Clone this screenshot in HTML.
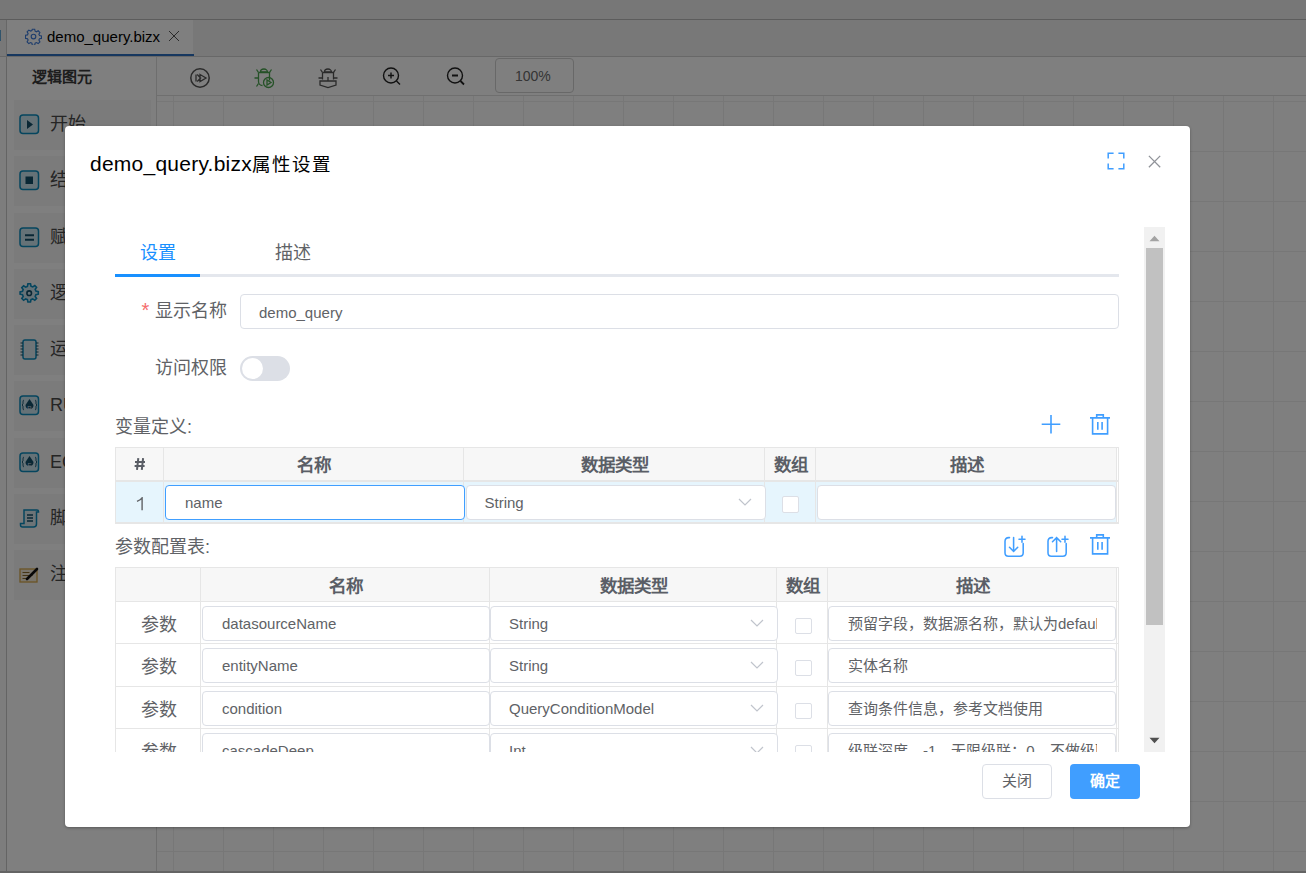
<!DOCTYPE html><html lang="zh-CN"><head><meta charset="utf-8"><style>
*{box-sizing:border-box;margin:0;padding:0}
html,body{width:1306px;height:873px;overflow:hidden;background:#fff;font-family:"Liberation Sans",sans-serif;position:relative}
.a{position:absolute}
.t{white-space:nowrap}
#top{left:0;top:0;width:1306px;height:20px;background:#efefef;border-bottom:1px solid #b9b9b9}
#tabs{left:0;top:20px;width:1306px;height:37px;background:#f0f0f0;border-bottom:1px solid #d0d0d0}
#tab1{left:6px;top:20px;width:187px;height:36px;background:#fff;border-left:1px solid #cfcfcf}
#tab1u{left:7px;top:54px;width:187px;height:2px;background:#2d6fbf}
#strip{left:0;top:57px;width:7px;height:816px;background:#fafafa;border-right:1px solid #c8c8c8}
#lp{left:7px;top:57px;width:150px;height:816px;background:#fff;border-right:1px solid #dcdcdc}
.item{left:14px;width:137px;height:50px;background:#f7f7f7}
.itxt{left:50px;font-size:18px;color:#4a4a4a;line-height:20px}
.ico{left:19px;width:21px;height:21px}
#tb{left:157px;top:57px;width:1149px;height:39px;background:#fff;border-bottom:1px solid #dedede}
#grid{left:157px;top:96px;width:1149px;height:776px;
 background-image:linear-gradient(to right,#eeeeee 1px,transparent 1px),linear-gradient(to bottom,#eeeeee 1px,transparent 1px);
 background-size:50px 50px;background-position:16px 5px}
#bot{left:0;top:871px;width:1306px;height:2px;background:#c8c8c8}
#mask{left:0;top:0;width:1306px;height:873px;background:rgba(0,0,0,.5)}
#dlg{left:65px;top:126px;width:1125px;height:701px;background:#fff;border-radius:4px;box-shadow:0 1px 3px rgba(0,0,0,.3)}
.lbl{font-size:18px;line-height:20px;color:#606266}
.inp{border:1px solid #dcdfe6;border-radius:4px;background:#fff}
.itx{font-size:15px;line-height:20px;color:#606266}
.hd{font-size:17.5px;line-height:20px;font-weight:bold;color:#5a5e66;text-align:center}
.cb{width:17px;height:17px;border:1px solid #dcdfe6;border-radius:2px;background:#fff}
</style></head><body>
<div class="a" id="top"></div><div class="a" id="tabs"></div><div class="a" id="tab1"></div><div class="a" id="tab1u"></div>
<svg class="a" style="left:25px;top:28px" width="17" height="17" viewBox="0 0 17 17"><g fill="none" stroke="#3d7bd9" stroke-width="1.15">
<path d="M7.3 1.2h2.4l.4 2 1.3.6 1.8-1 1.7 1.7-1 1.8.6 1.3 2 .4v2.4l-2 .4-.6 1.3 1 1.8-1.7 1.7-1.8-1-1.3.6-.4 2H7.3l-.4-2-1.3-.6-1.8 1-1.7-1.7 1-1.8-.6-1.3-2-.4V7.3l2-.4.6-1.3-1-1.8 1.7-1.7 1.8 1 1.3-.6z"/><circle cx="8.5" cy="8.5" r="2.3"/></g></svg>
<div class="a t" style="left:47px;top:27px;font-size:15px;color:#000;line-height:20px">demo_query.bizx</div>
<svg class="a" style="left:168px;top:30px" width="12" height="12" viewBox="0 0 12 12"><path d="M1 1L11 11M11 1L1 11" stroke="#444" stroke-width="0.9"/></svg>
<div class="a t" style="left:-7px;top:26px;font-size:15px;color:#222;line-height:20px">d</div>
<div class="a" id="strip"></div><div class="a" id="lp"></div>
<div class="a t" style="left:32px;top:67px;font-size:15px;font-weight:bold;color:#3a3a3a;line-height:20px">逻辑图元</div>
<div class="a item" style="top:100.0px"></div>
<div class="a t itxt" style="top:114.0px">开始</div>
<div class="a item" style="top:156.25px"></div>
<div class="a t itxt" style="top:170.25px">结束</div>
<div class="a item" style="top:212.5px"></div>
<div class="a t itxt" style="top:226.5px">赋值</div>
<div class="a item" style="top:268.75px"></div>
<div class="a t itxt" style="top:282.75px">逻辑</div>
<div class="a item" style="top:325.0px"></div>
<div class="a t itxt" style="top:339.0px">运算</div>
<div class="a item" style="top:381.25px"></div>
<div class="a t itxt" style="top:395.25px">RULE</div>
<div class="a item" style="top:437.5px"></div>
<div class="a t itxt" style="top:451.5px">ECA</div>
<div class="a item" style="top:493.75px"></div>
<div class="a t itxt" style="top:507.75px">脚本</div>
<div class="a item" style="top:550.0px"></div>
<div class="a t itxt" style="top:564.0px">注释</div>
<svg class="a ico" style="top:114.0px" viewBox="0 0 21 21"><rect x="1" y="1" width="18.5" height="18.5" rx="3" fill="#cbe4ef" stroke="#0b8bbd" stroke-width="1.5"/><path d="M8 6l6 4.5-6 4.5z" fill="#134e69"/></svg>
<svg class="a ico" style="top:170.25px" viewBox="0 0 21 21"><rect x="1" y="1" width="18.5" height="18.5" rx="3" fill="#cbe4ef" stroke="#0b8bbd" stroke-width="1.5"/><rect x="6.5" y="6.5" width="7.5" height="7.5" fill="#134e69"/></svg>
<svg class="a ico" style="top:226.5px" viewBox="0 0 21 21"><rect x="1" y="1" width="18.5" height="18.5" rx="3" fill="#cbe4ef" stroke="#0b8bbd" stroke-width="1.5"/><path d="M6 8.3h9M6 12.7h9" stroke="#134e69" stroke-width="2"/></svg>
<svg class="a ico" style="top:282.75px" viewBox="0 0 21 21"><path d="M8.9 .8h2.6l.5 2.4 1.7.7 2.1-1.4 1.8 1.8-1.4 2.1.7 1.7 2.4.5v2.6l-2.4.5-.7 1.7 1.4 2.1-1.8 1.8-2.1-1.4-1.7.7-.5 2.4H8.9l-.5-2.4-1.7-.7-2.1 1.4-1.8-1.8 1.4-2.1-.7-1.7-2.4-.5V8.9l2.4-.5.7-1.7-1.4-2.1 1.8-1.8 2.1 1.4 1.7-.7z" fill="#cbe4ef" stroke="#0b8bbd" stroke-width="1.6"/><circle cx="10.2" cy="10.2" r="2.3" fill="none" stroke="#134e69" stroke-width="1.6"/></svg>
<svg class="a ico" style="top:339.0px" viewBox="0 0 21 21"><rect x="4" y="1" width="13" height="19" rx="2" fill="#dbe9ef" stroke="#0b8bbd" stroke-width="1.5"/><path d="M1.5 4h2.5M1.5 7h2.5M1.5 10h2.5M1.5 13h2.5M1.5 16h2.5M17 4h2.5M17 7h2.5M17 10h2.5M17 13h2.5M17 16h2.5" stroke="#134e69" stroke-width="1.2"/></svg>
<svg class="a ico" style="top:395.25px" viewBox="0 0 21 21"><rect x="1" y="1" width="18.5" height="18.5" rx="3" fill="#cbe4ef" stroke="#0b8bbd" stroke-width="1.5"/><path d="M10.5 4l4 6a4 4 0 1 1-8 0z" fill="#134e69"/><text x="10.5" y="15" font-size="6" text-anchor="middle" fill="#cde" font-family="Liberation Sans">R</text><path d="M5 5q-1 0-1 2v2l-1 1 1 1v2q0 2 1 2M16 5q1 0 1 2v2l1 1-1 1v2q0 2-1 2" fill="none" stroke="#134e69" stroke-width=".9"/></svg>
<svg class="a ico" style="top:451.5px" viewBox="0 0 21 21"><rect x="1" y="1" width="18.5" height="18.5" rx="3" fill="#cbe4ef" stroke="#0b8bbd" stroke-width="1.5"/><path d="M10.5 4l4 6a4 4 0 1 1-8 0z" fill="#134e69"/><text x="10.5" y="15" font-size="6" text-anchor="middle" fill="#cde" font-family="Liberation Sans">E</text><path d="M5 5q-1 0-1 2v2l-1 1 1 1v2q0 2 1 2M16 5q1 0 1 2v2l1 1-1 1v2q0 2-1 2" fill="none" stroke="#134e69" stroke-width=".9"/></svg>
<svg class="a ico" style="top:507.75px" viewBox="0 0 21 21"><path d="M5 2h13q1.5 0 1.5 1.5V4h-2v12q0 3-3 3H3.5q-2 0-2-2v-1.5h3.5V4q0-2 0-2z" fill="#dbe9ef" stroke="#0b8bbd" stroke-width="1.5"/><path d="M8 7h6M8 10h6M8 13h6" stroke="#134e69" stroke-width="1.4"/></svg>
<svg class="a ico" style="top:564.0px" viewBox="0 0 21 21"><rect x="1" y="5" width="17" height="13" fill="#f3ead8" stroke="#d6a84a" stroke-width="1.3"/><path d="M3.5 8.5h7M3.5 11.5h10M3.5 14.5h5" stroke="#8a6a2a" stroke-width="1.2"/><path d="M8 15l10-10" stroke="#111" stroke-width="2.6" stroke-linecap="round"/></svg>
<div class="a" id="tb"></div><div class="a" id="grid"></div>
<svg class="a" style="left:188px;top:66px" width="24" height="24" viewBox="0 0 24 24"><g fill="none" stroke="#555" stroke-width="1.5"><circle cx="12" cy="12" r="9.2"/><path d="M8 8.5v7M9.2 8.5l3.5 3.5-3.5 3.5M12 8.5l6 3.5-6 3.5z" stroke-width="1.3"/></g></svg>
<svg class="a" style="left:252px;top:66px" width="24" height="24" viewBox="0 0 24 24"><g fill="none" stroke="#4aa34f" stroke-width="1.3"><path d="M8.5 6a3.5 3 0 0 1 7 0z"/><path d="M6.5 6.5h11v8M6.5 6.5v9a4 4 0 0 0 4 4"/><path d="M2.5 12h3.5M4.5 3.5l2 3M19.5 3.5l-2 3M4.5 20.5l2-3"/><circle cx="16.5" cy="16.5" r="5"/><path d="M15 14v5l4-2.5z"/></g></svg>
<svg class="a" style="left:316px;top:66px" width="24" height="24" viewBox="0 0 24 24"><g fill="none" stroke="#555" stroke-width="1.3"><path d="M8.5 6a3.5 3 0 0 1 7 0z"/><path d="M6.5 6.5h11v7M6.5 6.5v7M12 11v4"/><path d="M2.5 12h4M17.5 12h4M4.5 3.5l2 3M19.5 3.5l-2 3"/><path d="M4 15h16v4l-8 2.5-8-2.5z"/></g></svg>
<svg class="a" style="left:380px;top:64px" width="24" height="24" viewBox="0 0 24 24"><g fill="none" stroke="#222" stroke-width="1.4"><circle cx="11" cy="11.5" r="7.5"/><path d="M16.5 17l3.5 3.5M11 8.5v6M8 11.5h6"/></g></svg>
<svg class="a" style="left:444px;top:64px" width="24" height="24" viewBox="0 0 24 24"><g fill="none" stroke="#222" stroke-width="1.4"><circle cx="11" cy="11.5" r="7.5"/><path d="M16.5 17l3.5 3.5M8 11.5h6" stroke-width="1.8"/></g></svg>
<div class="a" style="left:495px;top:58px;width:79px;height:35px;border:1px solid #d0d0d0;border-radius:4px"></div>
<div class="a t" style="left:515px;top:66px;font-size:14px;color:#6a6a6a;line-height:20px">100%</div>
<div class="a" id="bot"></div>
<div class="a" id="mask"></div>
<div class="a" id="dlg"></div>
<div class="a t" style="left:90px;top:152px;font-size:21px;color:#000;line-height:24px;letter-spacing:.24px">demo_query.bizx<span style="font-size:18.5px;letter-spacing:1.05px">属性设置</span></div>
<svg class="a" style="left:1107px;top:152px" width="18" height="18" viewBox="0 0 18 18"><path d="M1.2 6.6V1.2h5.4M11.4 1.2h5.4v5.4M16.8 11.4v5.4h-5.4M6.6 16.8H1.2v-5.4" fill="none" stroke="#409eff" stroke-width="1.5"/></svg>
<svg class="a" style="left:1147px;top:154px" width="15" height="15" viewBox="0 0 15 15"><path d="M1.9 1.9l11.3 11.3M13.2 1.9L1.9 13.2" stroke="#909399" stroke-width="1.3"/></svg>
<div class="a" style="left:65px;top:227px;width:1080px;height:525px;overflow:hidden">
<div class="a t lbl" style="left:75px;top:16px;width:40px;height:20px;color:#1890ff">设置</div>
<div class="a t lbl" style="left:210px;top:16px;width:40px;height:20px;">描述</div>
<div class="a" style="left:50px;top:47px;width:1004px;height:3px;background:#e4e7ed"></div>
<div class="a" style="left:50px;top:47px;width:85px;height:3px;background:#1890ff"></div>
<div class="a t" style="left:76.5px;top:72.5px;width:10px;height:20px;color:#f56c6c;font-size:20px;line-height:20px">*</div>
<div class="a t lbl" style="left:90px;top:74px;width:80px;height:20px;">显示名称</div>
<div class="a inp" style="left:175px;top:67px;width:879px;height:35px;"></div>
<div class="a t itx" style="left:194px;top:76px;width:200px;height:20px;">demo_query</div>
<div class="a t lbl" style="left:90px;top:131px;width:80px;height:20px;">访问权限</div>
<div class="a" style="left:175px;top:129px;width:50px;height:25px;background:#dcdfe6;border-radius:12.5px"></div>
<div class="a" style="left:177px;top:131px;width:21px;height:21px;background:#fff;border-radius:50%"></div>
<div class="a t lbl" style="left:50px;top:190px;width:100px;height:20px;">变量定义:</div>
<svg class="a" style="left:976px;top:187px;width:20px;height:20px;" viewBox="0 0 20 20"><path d="M10 1v18.5M.7 10.2h18.6" stroke="#409eff" stroke-width="1.6"/></svg>
<svg class="a" style="left:1025px;top:187px;width:20px;height:21px;" viewBox="0 0 20 21"><g fill="none" stroke="#409eff" stroke-width="1.6"><path d="M0 3.9h20M6.7 3.9V.9h6.6v3M2.6 3.9v16h15V3.9M7.8 7.9v7.8M12.1 7.9v7.8"/></g></svg>
<div class="a" style="left:50px;top:220px;width:1004px;height:77px;border:1px solid #e6e6e6;background:#fff"></div>
<div class="a" style="left:51px;top:295px;width:1002px;height:1px;background:#e6e6e6"></div>
<div class="a" style="left:51px;top:221px;width:1001px;height:33px;background:#f7f7f7"></div>
<div class="a" style="left:51px;top:254px;width:1001px;height:41px;background:#e6f5fd"></div>
<div class="a" style="left:51px;top:253px;width:1002px;height:2px;background:#e6e6e6"></div>
<div class="a" style="left:98px;top:221px;width:1px;height:74px;background:#e6e6e6"></div>
<div class="a" style="left:398px;top:221px;width:1px;height:74px;background:#e6e6e6"></div>
<div class="a" style="left:699px;top:221px;width:1px;height:74px;background:#e6e6e6"></div>
<div class="a" style="left:750px;top:221px;width:1px;height:74px;background:#e6e6e6"></div>
<div class="a" style="left:1051px;top:221px;width:1px;height:74px;background:#e6e6e6"></div>
<svg class="a" style="left:69px;top:230px;width:12px;height:14px;" viewBox="0 0 12 14"><path d="M4.3 1.2L3 12.8M9.1 1.2L7.8 12.8M1 4.9h10M.6 8.9h10" stroke="#5a5e66" stroke-width="2"/></svg>
<div class="a t hd" style="left:99px;top:228px;width:300px;height:20px;">名称</div>
<div class="a t hd" style="left:399px;top:228px;width:302px;height:20px;">数据类型</div>
<div class="a t hd" style="left:701px;top:228px;width:50px;height:20px;">数组</div>
<div class="a t hd" style="left:751px;top:228px;width:301px;height:20px;">描述</div>
<svg class="a" style="left:71px;top:270px;width:8px;height:14px;" viewBox="0 0 8 14"><path d="M6.1 13.2V.8Q4.8 2.8 1 4.3" fill="none" stroke="#606266" stroke-width="1.4"/></svg>
<div class="a inp" style="left:100px;top:258px;width:300px;height:35px;border-color:#409eff"></div>
<div class="a t itx" style="left:120px;top:266px;width:200px;height:20px;">name</div>
<div class="a inp" style="left:400.5px;top:258px;width:300px;height:35px;"></div><div class="a t itx" style="left:419.5px;top:266px;width:200px;height:20px;">String</div><svg class="a" style="left:672.5px;top:271px;width:14px;height:8px;" viewBox="0 0 14 8"><path d="M1 1l6 6 6-6" fill="none" stroke="#c0c4cc" stroke-width="1.2"/></svg>
<div class="a cb" style="left:717px;top:269px;width:17px;height:17px;"></div>
<div class="a inp" style="left:752px;top:258px;width:299px;height:35px;"></div>
<div class="a t lbl" style="left:50px;top:310px;width:120px;height:20px;">参数配置表:</div>
<svg class="a" style="left:938.5px;top:308px;width:22px;height:22px;" viewBox="0 0 22 22"><g fill="none" stroke="#409eff" stroke-width="1.55" stroke-linecap="round"><path d="M5.5 2.6H4.8Q1 2.6 1 6.4v11.4q0 3.4 3.4 3.4h11.4q3.4 0 3.4-3.4V8.5"/><path d="M9.6 2.5v14M5.5 12.3l4.1 4.2 4.1-4.2"/><path d="M15 4.2h6M18 1.2v6"/></g></svg>
<svg class="a" style="left:981.5px;top:308px;width:22px;height:22px;" viewBox="0 0 22 22"><g fill="none" stroke="#409eff" stroke-width="1.55" stroke-linecap="round"><path d="M5.5 2.6H4.8Q1 2.6 1 6.4v11.4q0 3.4 3.4 3.4h11.4q3.4 0 3.4-3.4V8.5"/><path d="M9.6 16.5v-14M5.5 6.8l4.1-4.2 4.1 4.2"/><path d="M15 4.2h6M18 1.2v6"/></g></svg>
<svg class="a" style="left:1025px;top:307px;width:20px;height:21px;" viewBox="0 0 20 21"><g fill="none" stroke="#409eff" stroke-width="1.6"><path d="M0 3.9h20M6.7 3.9V.9h6.6v3M2.6 3.9v16h15V3.9M7.8 7.9v7.8M12.1 7.9v7.8"/></g></svg>
<div class="a" style="left:50px;top:340px;width:1004px;height:220px;border:1px solid #e6e6e6;background:#fff"></div>
<div class="a" style="left:51px;top:341px;width:1001px;height:33px;background:#f7f7f7"></div>
<div class="a" style="left:135px;top:341px;width:1px;height:220px;background:#e6e6e6"></div>
<div class="a" style="left:424px;top:341px;width:1px;height:220px;background:#e6e6e6"></div>
<div class="a" style="left:711px;top:341px;width:1px;height:220px;background:#e6e6e6"></div>
<div class="a" style="left:762px;top:341px;width:1px;height:220px;background:#e6e6e6"></div>
<div class="a" style="left:1051px;top:341px;width:1px;height:220px;background:#e6e6e6"></div>
<div class="a" style="left:51px;top:374px;width:1002px;height:1px;background:#e6e6e6"></div>
<div class="a" style="left:51px;top:416px;width:1002px;height:1px;background:#e6e6e6"></div>
<div class="a" style="left:51px;top:459px;width:1002px;height:1px;background:#e6e6e6"></div>
<div class="a" style="left:51px;top:501px;width:1002px;height:1px;background:#e6e6e6"></div>
<div class="a" style="left:51px;top:544px;width:1002px;height:1px;background:#e6e6e6"></div>
<div class="a t hd" style="left:136px;top:349px;width:289px;height:20px;">名称</div>
<div class="a t hd" style="left:425.5px;top:349px;width:287px;height:20px;">数据类型</div>
<div class="a t hd" style="left:712.5px;top:349px;width:51px;height:20px;">数组</div>
<div class="a t hd" style="left:763px;top:349px;width:289px;height:20px;">描述</div>
<div class="a t lbl" style="left:76px;top:388px;width:40px;height:20px;">参数</div>
<div class="a inp" style="left:137px;top:379px;width:288px;height:35px;"></div>
<div class="a t itx" style="left:157px;top:387px;width:240px;height:20px;">datasourceName</div>
<div class="a inp" style="left:425px;top:379px;width:288px;height:35px;"></div><div class="a t itx" style="left:444px;top:387px;width:200px;height:20px;">String</div><svg class="a" style="left:685px;top:392px;width:14px;height:8px;" viewBox="0 0 14 8"><path d="M1 1l6 6 6-6" fill="none" stroke="#c0c4cc" stroke-width="1.2"/></svg>
<div class="a cb" style="left:730px;top:390.5px;width:16.5px;height:16.5px;"></div>
<div class="a inp" style="left:763px;top:379px;width:288px;height:35px;"></div>
<div class="a t itx" style="left:783px;top:387px;width:249px;height:20px;overflow:hidden">预留字段，数据源名称，默认为default</div>
<div class="a t lbl" style="left:76px;top:430px;width:40px;height:20px;">参数</div>
<div class="a inp" style="left:137px;top:421px;width:288px;height:35px;"></div>
<div class="a t itx" style="left:157px;top:429px;width:240px;height:20px;">entityName</div>
<div class="a inp" style="left:425px;top:421px;width:288px;height:35px;"></div><div class="a t itx" style="left:444px;top:429px;width:200px;height:20px;">String</div><svg class="a" style="left:685px;top:434px;width:14px;height:8px;" viewBox="0 0 14 8"><path d="M1 1l6 6 6-6" fill="none" stroke="#c0c4cc" stroke-width="1.2"/></svg>
<div class="a cb" style="left:730px;top:432.5px;width:16.5px;height:16.5px;"></div>
<div class="a inp" style="left:763px;top:421px;width:288px;height:35px;"></div>
<div class="a t itx" style="left:783px;top:429px;width:249px;height:20px;overflow:hidden">实体名称</div>
<div class="a t lbl" style="left:76px;top:473px;width:40px;height:20px;">参数</div>
<div class="a inp" style="left:137px;top:464px;width:288px;height:35px;"></div>
<div class="a t itx" style="left:157px;top:472px;width:240px;height:20px;">condition</div>
<div class="a inp" style="left:425px;top:464px;width:288px;height:35px;"></div><div class="a t itx" style="left:444px;top:472px;width:200px;height:20px;">QueryConditionModel</div><svg class="a" style="left:685px;top:477px;width:14px;height:8px;" viewBox="0 0 14 8"><path d="M1 1l6 6 6-6" fill="none" stroke="#c0c4cc" stroke-width="1.2"/></svg>
<div class="a cb" style="left:730px;top:475.5px;width:16.5px;height:16.5px;"></div>
<div class="a inp" style="left:763px;top:464px;width:288px;height:35px;"></div>
<div class="a t itx" style="left:783px;top:472px;width:249px;height:20px;overflow:hidden">查询条件信息，参考文档使用</div>
<div class="a t lbl" style="left:76px;top:515px;width:40px;height:20px;">参数</div>
<div class="a inp" style="left:137px;top:506px;width:288px;height:35px;"></div>
<div class="a t itx" style="left:157px;top:514px;width:240px;height:20px;">cascadeDeep</div>
<div class="a inp" style="left:425px;top:506px;width:288px;height:35px;"></div><div class="a t itx" style="left:444px;top:514px;width:200px;height:20px;">Int</div><svg class="a" style="left:685px;top:519px;width:14px;height:8px;" viewBox="0 0 14 8"><path d="M1 1l6 6 6-6" fill="none" stroke="#c0c4cc" stroke-width="1.2"/></svg>
<div class="a cb" style="left:730px;top:517.5px;width:16.5px;height:16.5px;"></div>
<div class="a inp" style="left:763px;top:506px;width:288px;height:35px;"></div>
<div class="a t itx" style="left:783px;top:514px;width:249px;height:20px;overflow:hidden">级联深度，-1，无限级联：0，不做级联</div>
</div>
<div class="a" style="left:1144px;top:227px;width:21px;height:525px;background:#f1f1f1"></div>
<svg class="a" style="left:1149px;top:235px" width="11" height="7" viewBox="0 0 11 7"><path d="M.5 6.3L5.5 .8l5 5.5z" fill="#a3a3a3"/></svg>
<div class="a" style="left:1146px;top:248px;width:17px;height:377px;background:#c1c1c1"></div>
<svg class="a" style="left:1149px;top:737px" width="11" height="7" viewBox="0 0 11 7"><path d="M.5 .7L5.5 6.2l5-5.5z" fill="#505050"/></svg>
<div class="a" style="left:982px;top:764px;width:70px;height:35px;border:1px solid #dcdfe6;border-radius:4px;background:#fff"></div>
<div class="a t" style="left:1002px;top:771px;font-size:15px;line-height:20px;color:#606266">关闭</div>
<div class="a" style="left:1070px;top:764px;width:70px;height:35px;border-radius:4px;background:#409eff"></div>
<div class="a t" style="left:1090px;top:771px;font-size:15px;line-height:20px;color:#fff;font-weight:bold">确定</div>
</body></html>
